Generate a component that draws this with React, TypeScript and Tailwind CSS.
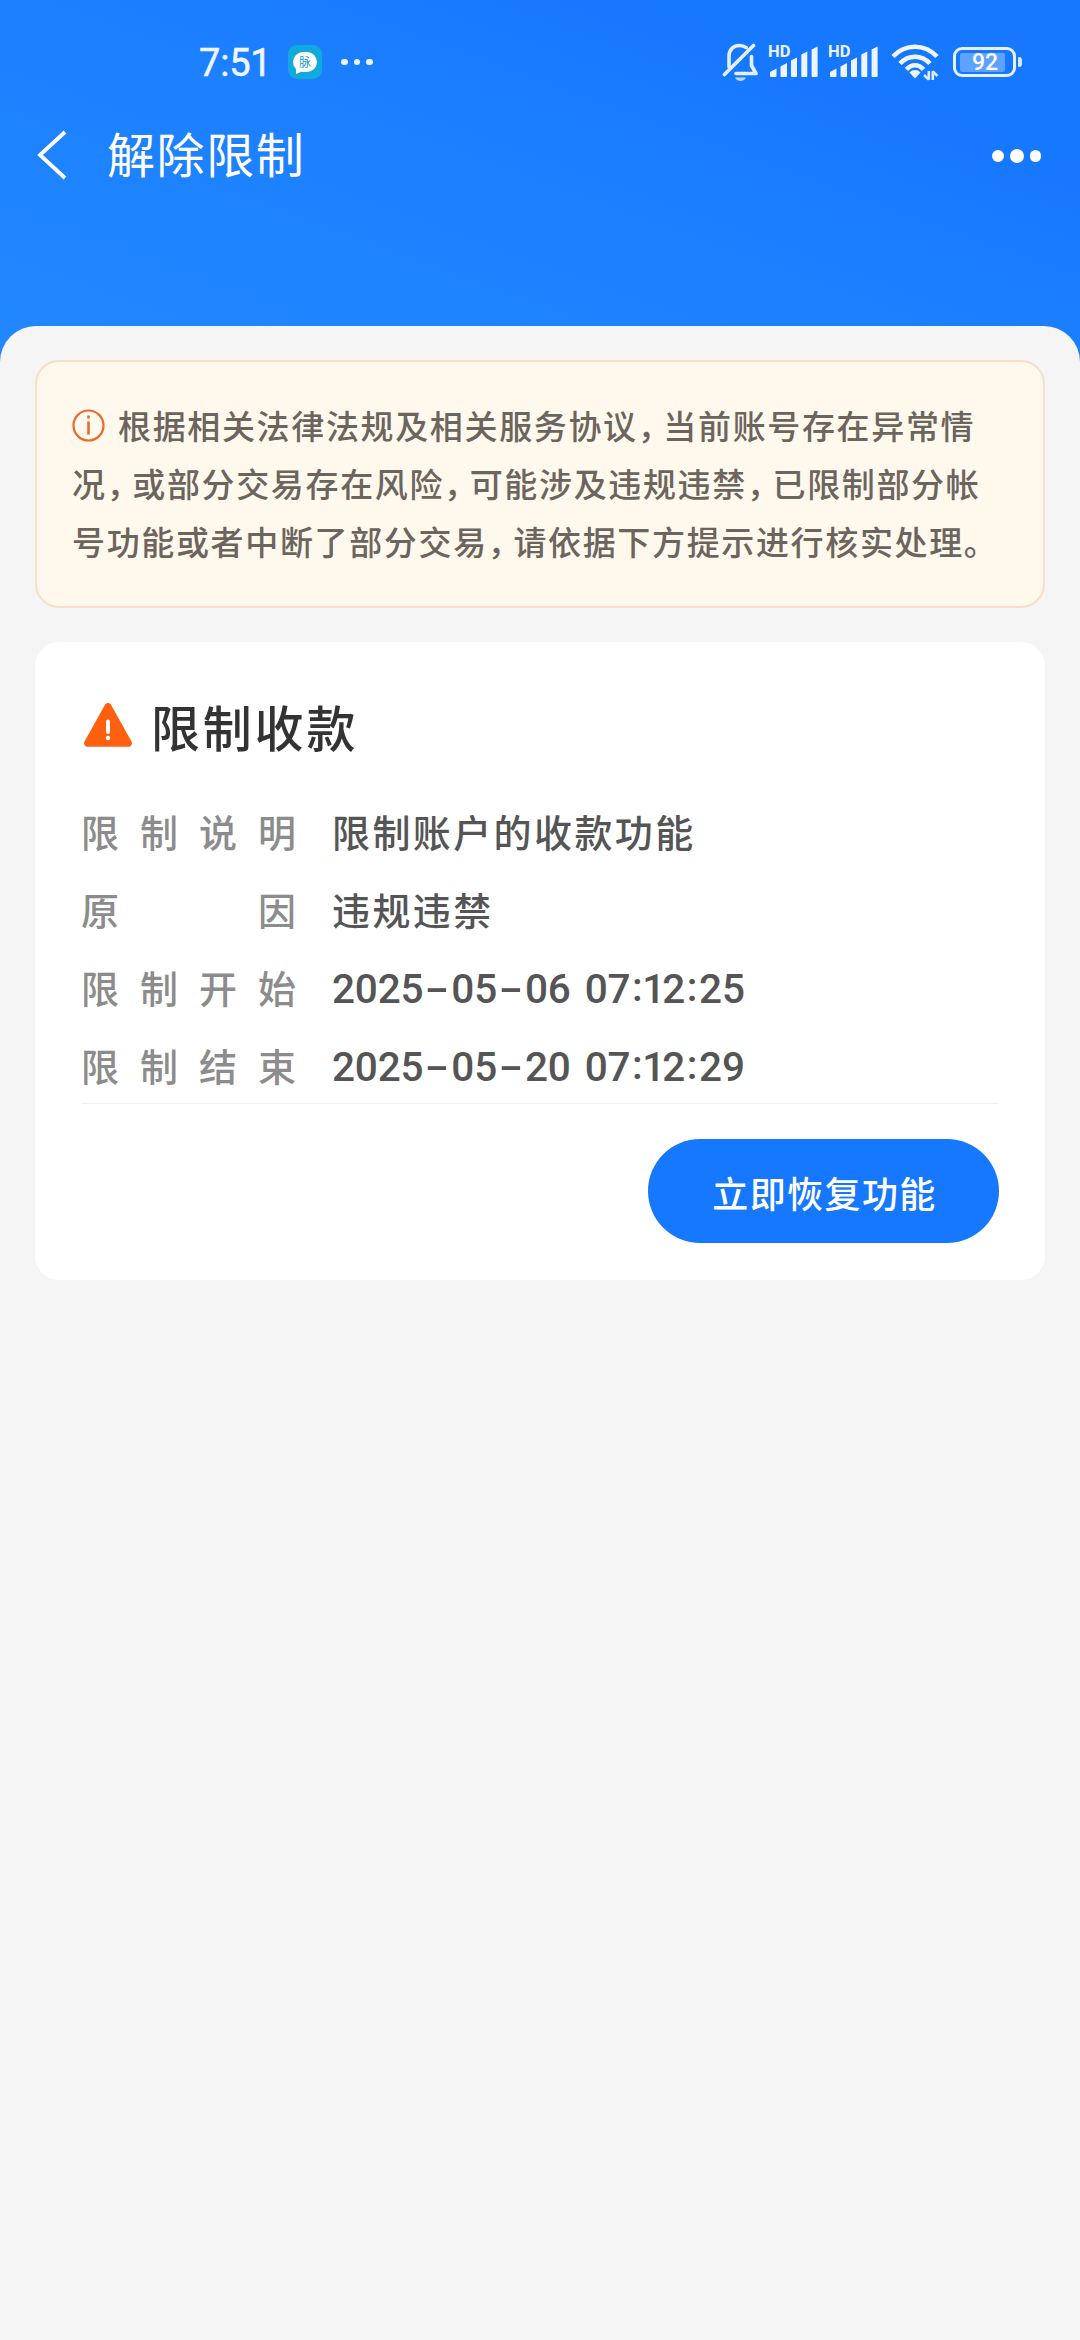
import React from "react";

function MutedBell() {
  return (
    <svg className="ml-[-1px] h-[40px] w-[36px] shrink-0" viewBox="0 0 36 40" fill="none" stroke="#e3f0ff" strokeWidth="3.6" strokeLinecap="round" strokeLinejoin="round">
      <path d="M7 25V14.500C7 7.500 11.500 3.500 17.500 3.500c2.600 0 5 .8 6.800 2.200" />
      <path d="M29.500 14.500v9l4.500 8H14" />
      <path d="M31.500 3.500 2.500 32.500" />
      <path d="M13 35.500h11c-1.600 4.600-9.400 4.600-11 0Z" fill="#b9d8ff" stroke="none" />
    </svg>
  );
}

function Signal() {
  return (
    <div className="relative h-[34px] w-[50px] shrink-0">
      <span className="absolute -top-[3px] left-0 font-[Roboto,sans-serif] text-[16.500px] leading-[20px] font-bold text-[#e9f3ff]">HD</span>
      <svg className="h-[34px] w-[50px]" viewBox="0 0 50 34" fill="#edf6ff">
        <path d="M2 27 8.500 23.500V31a1 1 0 0 1-1 1H3a1 1 0 0 1-1-1Z" />
        <path d="M12.500 21.500 19 18v13a1 1 0 0 1-1 1h-4.500a1 1 0 0 1-1-1Z" />
        <path d="M23 15.500 29 12.500V31a1 1 0 0 1-1 1h-4a1 1 0 0 1-1-1Z" />
        <path d="M33.300 9.500 39.300 6.500V31a1 1 0 0 1-1 1h-4a1 1 0 0 1-1-1Z" />
        <path d="M43.600 4.500 49.600 1.500V31a1 1 0 0 1-1 1h-4a1 1 0 0 1-1-1Z" />
      </svg>
    </div>
  );
}

function Wifi() {
  return (
    <svg className="h-[38px] w-[48px] shrink-0" viewBox="0 0 48 38" fill="none">
      <g stroke="#edf6ff" strokeWidth="4.600">
        <path d="M2 13.500C14 .4 34 .4 46 13.500" />
        <path d="M9 20.500c8.500-9 21.500-9 30 0" />
        <path d="M15.500 26.500c5-5.600 12-5.600 17 0" />
      </g>
      <path d="M18.500 29.500c3-3.300 8-3.300 11 0L24 35.500Z" fill="#edf6ff" />
      <path d="M37.800 28v8.500L33 32M41.800 37v-8.500l4.700 4.500" stroke="#dcecff" strokeWidth="2.600" strokeLinejoin="bevel" />
    </svg>
  );
}

function Battery() {
  return (
    <div className="flex shrink-0 items-center gap-[2px]">
      <div className="flex h-[30px] w-[63px] items-center rounded-[9px] border-[3px] border-[#e4f1ff] px-[4px]">
        <div className="flex h-[19px] w-[45px] items-center justify-center rounded-[2px] bg-[#5ea2ff]">
          <span className="ml-[5px] font-[Roboto,sans-serif] text-[23px] leading-none font-medium text-white">92</span>
        </div>
      </div>
      <div className="h-[10px] w-[4px] rounded-r-[3px] rounded-l-[1px] bg-[#d6e8ff]" />
    </div>
  );
}

function StatusBar() {
  return (
    <div className="flex h-[124px] items-center pr-[58px] pl-[199px]">
      <span className="w-[70px] pt-[2px] font-[Roboto,sans-serif] text-[38px] leading-none tracking-[-0.200px] text-[#eef6ff] [-webkit-text-stroke:0.500px_#eef6ff]">7:51</span>
      <div className="ml-[19px] flex size-[34px] items-center justify-center rounded-[9px] bg-[#12a9dc]">
        <div className="relative flex h-[20px] w-[24px] items-center justify-center rounded-full bg-white">
          <svg className="absolute bottom-[-2px] left-[3px] size-[7px]" viewBox="0 0 7 7" fill="#fff"><path d="M0 0v7l7-3Z" /></svg>
          <span className="relative text-[12px] leading-none text-[#159cc4]">脉</span>
        </div>
      </div>
      <div className="ml-[19px] flex gap-[6px]">
        <i className="size-[6.500px] rounded-full bg-[#eaf4ff]" />
        <i className="size-[6.500px] rounded-full bg-[#eaf4ff]" />
        <i className="size-[6.500px] rounded-full bg-[#eaf4ff]" />
      </div>
      <div className="ml-auto flex items-center">
        <MutedBell />
        <div className="ml-[10px]"><Signal /></div>
        <div className="ml-[10px]"><Signal /></div>
        <div className="ml-[13px]"><Wifi /></div>
        <div className="ml-[14px]"><Battery /></div>
      </div>
    </div>
  );
}

function TitleBar() {
  return (
    <div className="flex h-[62px] items-center pr-[39px] pl-[36px]">
      <svg className="h-[50px] w-[32px]" viewBox="0 0 32 50" fill="none" stroke="#fff" strokeWidth="3.800">
        <path d="M29 2 4 25 29 48" />
      </svg>
      <h1 className="mb-[7px] ml-[39px] text-[48px] leading-none font-normal tracking-[1.600px] text-white">解除限制</h1>
      <div className="mt-[2px] ml-auto flex items-center gap-[6px]">
        <i className="size-[11.500px] rounded-full bg-white" />
        <i className="size-[14px] rounded-full bg-white" />
        <i className="size-[11.500px] rounded-full bg-white" />
      </div>
    </div>
  );
}

function Comma() {
  return <span className="inline-block w-[25.600px] [font-feature-settings:'halt']">，</span>;
}

function NoticeLine({ text, icon = false }: { text: string; icon?: boolean }) {
  const parts = text.split("，");
  return (
    <div className="flex h-[58px] items-center whitespace-nowrap">
      {icon && (
        <svg className="mr-[13px] h-[33px] w-[33px] shrink-0" viewBox="0 0 33 33" fill="none" stroke="#ea6a2c">
          <circle cx="16.500" cy="16.500" r="15" strokeWidth="2.200" />
          <path d="M16.500 12.500V25.500" strokeWidth="2.600" />
          <path d="M16.500 6.500V9.500" strokeWidth="2.600" />
        </svg>
      )}
      <p>
        {parts.map((p, i) => (
          <React.Fragment key={i}>
            {i > 0 && <Comma />}
            {p}
          </React.Fragment>
        ))}
      </p>
    </div>
  );
}

function Notice() {
  return (
    <section className="h-[248px] rounded-[24px] border-2 border-[#f6dfcb] bg-[#fff8ec] pt-[34px] pl-[35px] text-[33px] leading-[58px] font-medium tracking-[1.650px] text-[#6b655e]">
      <NoticeLine icon text="根据相关法律法规及相关服务协议，当前账号存在异常情" />
      <NoticeLine text="况，或部分交易存在风险，可能涉及违规违禁，已限制部分帐" />
      <NoticeLine text="号功能或者中断了部分交易，请依据下方提示进行核实处理。" />
    </section>
  );
}

function DateText({ value }: { value: string }) {
  return (
    <span className="relative top-px font-[Roboto,sans-serif] text-[40.500px] tracking-[-0.200px]">
      {value.split("").map((c, i) => {
        if (c === "-") return <span key={i} className="inline-block w-[28px] scale-x-[1.750] text-center">-</span>;
        if (c === ":") return <span key={i} className="inline-block w-[14px] -translate-y-[2px] text-center">:</span>;
        if (c === " ") return <span key={i} className="inline-block w-[14px] whitespace-pre"> </span>;
        if (c === "1") return <span key={i} className="inline-block w-[18px] -indent-[2px]">1</span>;
        return <span key={i}>{c}</span>;
      })}
    </span>
  );
}

function Row({ label, value, date = false }: { label: string; value: string; date?: boolean }) {
  return (
    <div className="flex h-[78px] items-center text-[38px] leading-[78px] font-medium">
      <dt className="flex w-[215px] justify-between text-[#8c8c8c]">
        {label.split("").map((c, i) => <span key={i}>{c}</span>)}
      </dt>
      <dd className="ml-[36px] tracking-[2.400px] text-[#555]">{date ? <DateText value={value} /> : value}</dd>
    </div>
  );
}

function RestrictionCard() {
  return (
    <section className="mt-[34px] h-[638px] rounded-[24px] bg-white px-[46px] pt-[48px]">
      <div className="flex h-[70px] items-center">
        <svg className="ml-[2px] h-[46px] w-[50px]" viewBox="0 0 50 46">
          <path d="M22 2.800c1.300-2.300 4.700-2.300 6 0L48.500 39.500c1.300 2.400-.3 5.300-3 5.300h-41c-2.700 0-4.300-2.900-3-5.300Z" fill="#ff6010" />
          <path d="M25 19.500v10.500" stroke="#fff" strokeWidth="4" strokeLinecap="round" />
          <circle cx="25" cy="36" r="2.200" fill="#fff" />
        </svg>
        <h2 className="ml-[18px] text-[49px] leading-none font-medium tracking-[2.800px] text-[#333]">限制收款</h2>
      </div>
      <dl className="mt-[32px] h-[312px] border-b border-[#eee]">
        <Row label="限制说明" value="限制账户的收款功能" />
        <Row label="原因" value="违规违禁" />
        <Row label="限制开始" value="2025-05-06 07:12:25" date />
        <Row label="限制结束" value="2025-05-20 07:12:29" date />
      </dl>
      <button className="mt-[35px] ml-auto flex h-[104px] w-[351px] items-center justify-center rounded-full bg-[#1677ff] pt-px pl-[2px] text-[36px] leading-none font-medium tracking-[1.400px] text-white">
        立即恢复功能
      </button>
    </section>
  );
}

export default function App() {
  return (
    <div className="h-[2340px] w-[1080px] overflow-hidden bg-[#f5f5f5] font-['Noto_Sans_CJK_SC',sans-serif]">
      <header className="h-[376px] bg-linear-[20deg,#2288ff_0%,#1c80ff_50%,#1677ff_80%]">
        <StatusBar />
        <TitleBar />
      </header>
      <main className="-mt-[50px] h-[2014px] rounded-t-[36px] bg-[#f5f5f5] px-[35px] pt-[34px]">
        <Notice />
        <RestrictionCard />
      </main>
    </div>
  );
}
